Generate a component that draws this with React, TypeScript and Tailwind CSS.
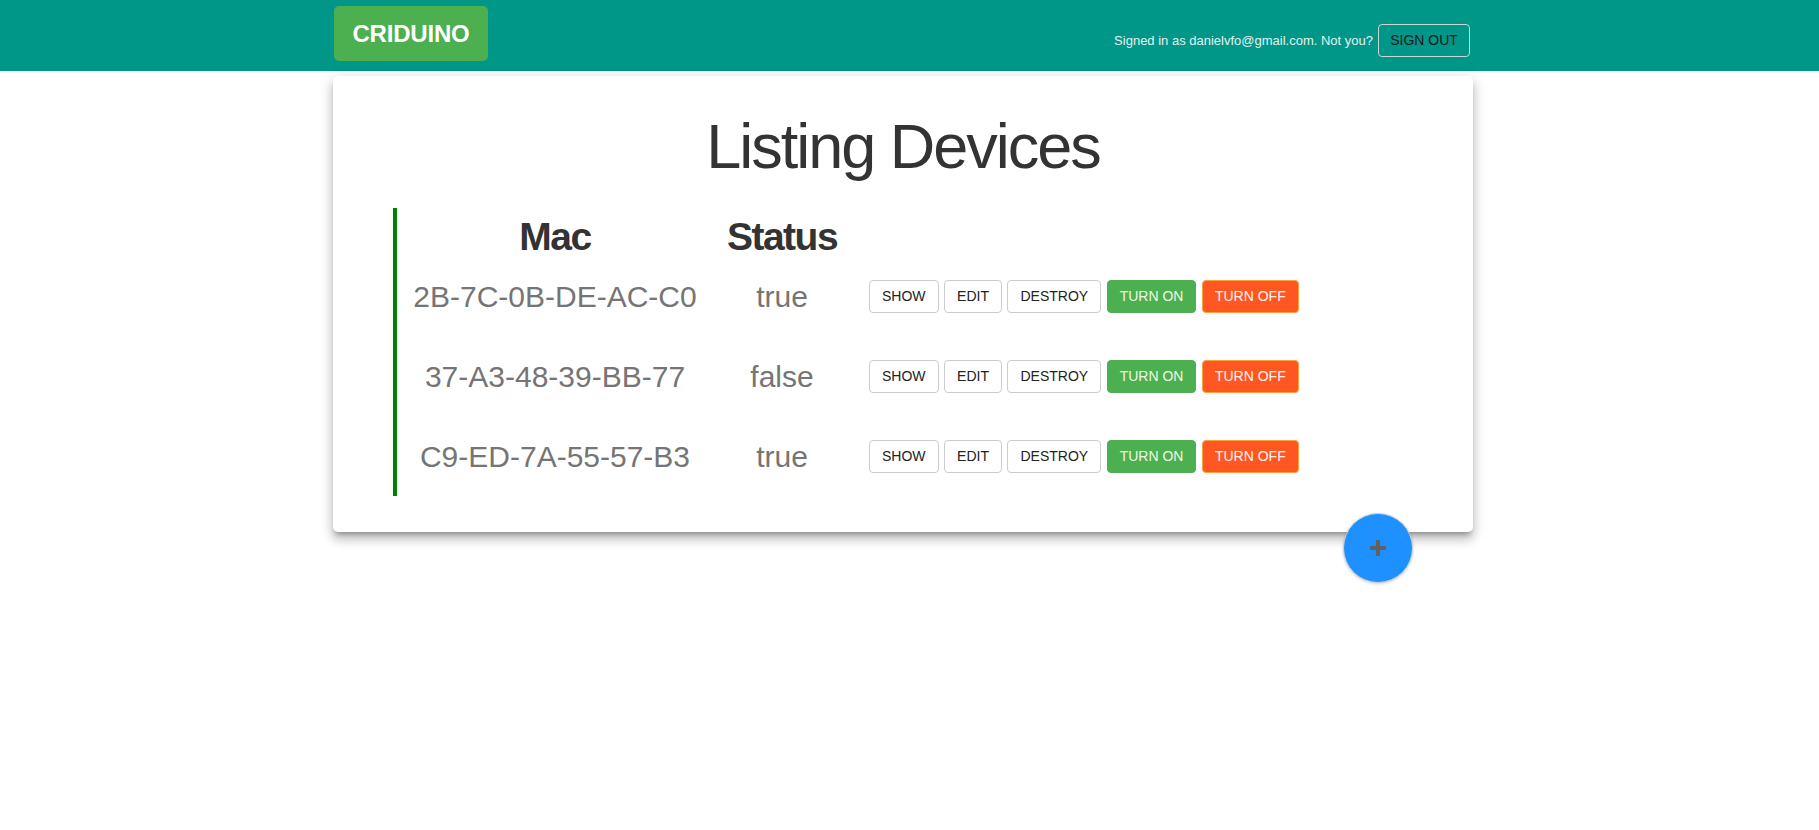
import React from 'react';

interface Device {
  id: number;
  mac: string;
  status: boolean;
}

const devices: Device[] = [
  { id: 1, mac: '2B-7C-0B-DE-AC-C0', status: true },
  { id: 2, mac: '37-A3-48-39-BB-77', status: false },
  { id: 3, mac: 'C9-ED-7A-55-57-B3', status: true },
];

const baseBtn = 'h-[33px] px-[12px] rounded-[4px] border text-[14px] leading-[20px] uppercase';

const App: React.FC = () => {
  return (
    <div className="min-h-[830px] bg-white font-['Liberation_Sans',Arial,sans-serif]">
      {/* Top bar */}
      <header className="h-[71px] bg-[#009688]">
        <div className="ml-[333px] w-[1140px] flex items-start justify-between">
          <a className="ml-[1px] mt-[6px] h-[55px] w-[154px] rounded-[5px] bg-[#4caf50] flex items-center justify-center text-white font-bold text-[24px] tracking-[-0.2px]">
            CRIDUINO
          </a>
          <div className="mt-[24px] mr-[3px] flex items-end gap-[5px]">
            <span className="text-[13px] text-[#e0f2f1] leading-[20px] mb-[6px]">
              Signed in as danielvfo@gmail.com. Not you?
            </span>
            <button className="h-[33px] w-[92px] rounded-[4px] border border-[#c8d6d4] text-[#1a1a1a] text-[14px]">
              SIGN OUT
            </button>
          </div>
        </div>
      </header>

      {/* Card */}
      <div className="relative ml-[333px] w-[1140px] mt-[5px]">
        <div className="bg-white rounded-[5px] pt-[34px] pb-[36px] shadow-[0_8px_10px_1px_rgba(0,0,0,0.14),0_3px_14px_2px_rgba(0,0,0,0.12),0_5px_5px_-3px_rgba(0,0,0,0.3)]">
          <h1 className="text-center text-[63px] leading-[72px] tracking-[-2px] text-[#333333]">
            Listing Devices
          </h1>

          <div className="mt-[26px] ml-[60px] w-[1000px] border-l-[4px] border-[#008000]">
            <div className="grid grid-cols-[316px_138px_1fr] h-[48px] items-center">
              <div className="text-center font-bold text-[39px] tracking-[-1.5px] text-[#333333]">Mac</div>
              <div className="text-center font-bold text-[39px] tracking-[-1.5px] text-[#333333]">Status</div>
              <div />
            </div>
            {devices.map(d => (
              <div key={d.id} className="grid grid-cols-[316px_138px_1fr] h-[80px] items-center">
                <div className="text-center text-[30px] text-[#757575]">{d.mac}</div>
                <div className="text-center text-[30px] text-[#757575]">{d.status ? 'true' : 'false'}</div>
                <div className="pl-[18px] flex gap-[5.5px]">
                  <button className={`${baseBtn} bg-white border-[#cccccc] text-[#222222]`}>Show</button>
                  <button className={`${baseBtn} bg-white border-[#cccccc] text-[#222222]`}>Edit</button>
                  <button className={`${baseBtn} bg-white border-[#cccccc] text-[#222222]`}>Destroy</button>
                  <button className={`${baseBtn} bg-[#4caf50] border-[#4caf50] text-[#f1f8e9]`}>Turn On</button>
                  <button className={`${baseBtn} bg-[#ff5722] border-[#f9a23a] text-[#fff3f0]`}>Turn Off</button>
                </div>
              </div>
            ))}
          </div>
        </div>

        {/* Floating add button */}
        <button className="absolute right-[60px] top-[437px] w-[70px] h-[70px] rounded-full bg-[#1e90ff] border border-[#d0d0d0] shadow-[0_1px_3px_rgba(0,0,0,0.2)] flex items-center justify-center">
          <svg width="16" height="16" viewBox="0 0 16 16">
            <rect x="0" y="6" width="16" height="4" fill="#616161" />
            <rect x="6" y="0" width="4" height="16" fill="#616161" />
          </svg>
        </button>
      </div>
    </div>
  );
};

export default App;
